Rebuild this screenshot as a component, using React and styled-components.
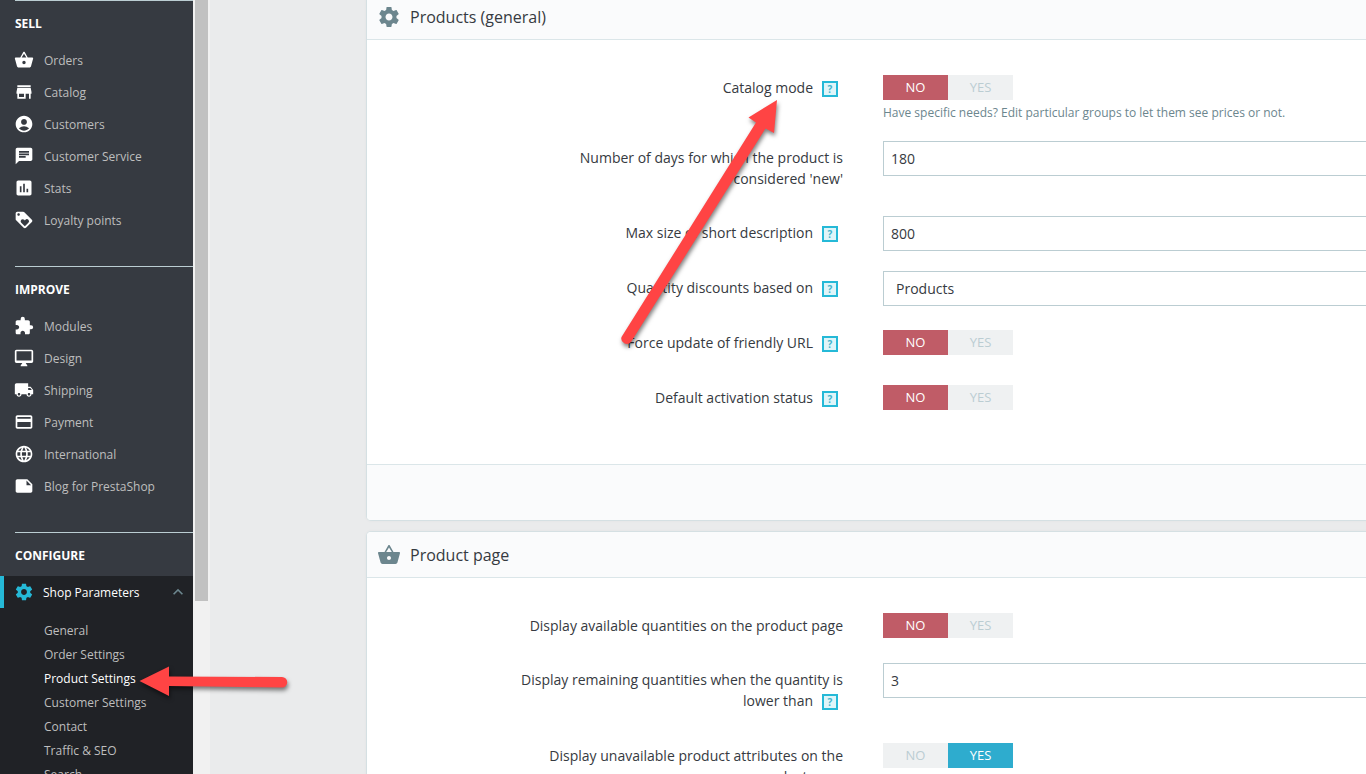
import { useState } from "react"
import styled, { createGlobalStyle } from "styled-components"
import {
    MdAccountCircle, MdChat, MdLoyalty, MdExtension,
    MdLocalShipping, MdLanguage, MdNote, MdKeyboardArrowUp,
} from "react-icons/md"

const icon = (d) => function Icon() {
    return (
        <svg viewBox="0 0 24 24" fill="currentColor" aria-hidden="true">
            <path d={d} />
        </svg>
    )
}

const BasketIcon = icon("M16.500 9L12.830 2.440c-.19-.28-.51-.42-.83-.42-.32 0-.64.14-.83.43L7.500 9H2c-.55 0-1 .45-1 1 0 .09.01.18.04.27l2.54 9.27c.23.84 1 1.46 1.92 1.46h13c.92 0 1.69-.62 1.93-1.46l2.54-9.27L23 10c0-.55-.45-1-1-1h-5.500zM9.200 9L12 4.600L14.800 9H9.200zm2.800 8c-1.1 0-2-.9-2-2s.9-2 2-2 2 .9 2 2-.9 2-2 2z")
const StoreIcon = icon("M20 4H4v2h16V4zm1 10v-2l-1-5H4l-1 5v2h1v6h10v-6h4v6h2v-6h1zm-9 4H6v-4h6v4z")
const StatsIcon = icon("M19 3H5c-1.1 0-2 .9-2 2v14c0 1.1.9 2 2 2h14c1.1 0 2-.9 2-2V5c0-1.1-.9-2-2-2zM9 17H7v-7h2v7zm4 0h-2V7h2v10zm4 0h-2v-4h2v4z")
const DesktopIcon = icon("M21 2H3c-1.1 0-2 .9-2 2v12c0 1.1.9 2 2 2h7l-2 3v1h8v-1l-2-3h7c1.1 0 2-.9 2-2V4c0-1.1-.9-2-2-2zm0 13H3V4h18v11z")
const CardIcon = icon("M20 4H4c-1.11 0-1.99.89-1.99 2L2 18c0 1.11.89 2 2 2h16c1.11 0 2-.89 2-2V6c0-1.11-.89-2-2-2zm0 14H4v-6h16v6zm0-10H4V6h16v2z")
const GearIcon = icon("M19.43 12.98c.04-.32.07-.64.07-.98s-.03-.66-.07-.98l2.11-1.65c.19-.15.24-.42.12-.64l-2-3.46c-.12-.22-.39-.3-.61-.22l-2.49 1c-.52-.4-1.08-.73-1.69-.98l-.38-2.65C14.46 2.18 14.25 2 14 2h-4c-.25 0-.46.18-.49.42l-.38 2.65c-.61.25-1.17.59-1.69.98l-2.49-1c-.23-.09-.49 0-.61.22l-2 3.46c-.13.22-.07.49.12.64l2.11 1.65c-.04.32-.07.65-.07.98s.03.66.07.98l-2.11 1.65c-.19.15-.24.42-.12.64l2 3.46c.12.22.39.3.61.22l2.49-1c.52.4 1.08.73 1.69.98l.38 2.65c.03.24.24.42.49.42h4c.25 0 .46-.18.49-.42l.38-2.65c.61-.25 1.17-.59 1.69-.98l2.49 1c.23.09.49 0 .61-.22l2-3.46c.12-.22.07-.49-.12-.64l-2.11-1.65zM12 15.5c-1.93 0-3.5-1.57-3.5-3.5s1.57-3.5 3.5-3.5 3.5 1.57 3.5 3.5-1.57 3.5-3.5 3.5z")

const sections = [
    {
        title: 'SELL',
        links: [
            { label: 'Orders', Icon: BasketIcon },
            { label: 'Catalog', Icon: StoreIcon },
            { label: 'Customers', Icon: MdAccountCircle },
            { label: 'Customer Service', Icon: MdChat },
            { label: 'Stats', Icon: StatsIcon },
            { label: 'Loyalty points', Icon: MdLoyalty },
        ],
    },
    {
        title: 'IMPROVE',
        links: [
            { label: 'Modules', Icon: MdExtension },
            { label: 'Design', Icon: DesktopIcon },
            { label: 'Shipping', Icon: MdLocalShipping },
            { label: 'Payment', Icon: CardIcon },
            { label: 'International', Icon: MdLanguage },
            { label: 'Blog for PrestaShop', Icon: MdNote },
        ],
    },
]

const shopLinks = ['General', 'Order Settings', 'Product Settings', 'Customer Settings', 'Contact', 'Traffic & SEO', 'Search']

function Switch({ id, initial = false }){
    const [on, setOn] = useState(initial)

    return(
        <SwitchStyled role="radiogroup" aria-labelledby={`${id}-label`}>
            <SwitchOption $active={!on} $color="#c05c67">
                <input type="radio" id={id} name={id} checked={!on} onChange={()=> setOn(false)} />
                NO
            </SwitchOption>
            <SwitchOption $active={on} $color="#2eacce">
                <input type="radio" name={id} checked={on} onChange={()=> setOn(true)} />
                YES
            </SwitchOption>
        </SwitchStyled>
    )
}

function Field({ id, label, help, children }){
    return(
        <FieldRow>
            <FieldLabel id={`${id}-label`} htmlFor={id}>
                {label}
                {help && <HelpBox>?</HelpBox>}
            </FieldLabel>
            <div>{children}</div>
        </FieldRow>
    )
}

function Sidebar(){
    return(
        <SidebarStyled>
            {sections.map(({ title, links }) => (
                <NavSection key={title}>
                    <NavTitle>{title}</NavTitle>
                    <ul>
                        {links.map(({ label, Icon }) => (
                            <li key={label}>
                                <NavLink href="#"><Icon />{label}</NavLink>
                            </li>
                        ))}
                    </ul>
                </NavSection>
            ))}
            <NavSection>
                <NavTitle>CONFIGURE</NavTitle>
            </NavSection>
            <OpenMenu>
                <OpenLink href="#">
                    <GearIcon />
                    Shop Parameters
                    <MdKeyboardArrowUp className="arrow" />
                </OpenLink>
                <ul>
                    {shopLinks.map((label) => (
                        <li key={label}>
                            <SubLink href="#" $current={label === 'Product Settings'}>{label}</SubLink>
                        </li>
                    ))}
                </ul>
            </OpenMenu>
        </SidebarStyled>
    )
}

export default function App(){
    return(
        <>
            <GlobalStyle />
            <Page>
                <Sidebar />
                <ScrollTrack><ScrollThumb /></ScrollTrack>
                <Main>
                    <Panel>
                        <PanelHeader><GearIcon /><h2>Products (general)</h2></PanelHeader>
                        <PanelBody>
                            <Field id="catalog" label="Catalog mode" help>
                                <Switch id="catalog" />
                                <Hint>Have specific needs? Edit particular groups to let them see prices or not.</Hint>
                            </Field>
                            <Field id="days" label="Number of days for which the product is considered 'new'">
                                <TextInput id="days" type="text" defaultValue="180" />
                            </Field>
                            <Field id="short" label="Max size of short description" help>
                                <TextInput id="short" type="text" defaultValue="800" />
                            </Field>
                            <Field id="discounts" label="Quantity discounts based on" help>
                                <Select id="discounts">
                                    <option>Products</option>
                                    <option>Combinations</option>
                                </Select>
                            </Field>
                            <Field id="url" label="Force update of friendly URL" help>
                                <Switch id="url" />
                            </Field>
                            <Field id="activation" label="Default activation status" help>
                                <Switch id="activation" />
                            </Field>
                        </PanelBody>
                        <PanelFooter />
                    </Panel>
                    <Panel>
                        <PanelHeader><BasketIcon /><h2>Product page</h2></PanelHeader>
                        <PanelBody>
                            <Field id="available" label="Display available quantities on the product page">
                                <Switch id="available" />
                            </Field>
                            <Field id="remaining" label="Display remaining quantities when the quantity is lower than" help>
                                <TextInput id="remaining" type="text" defaultValue="3" />
                            </Field>
                            <Field id="unavailable" label="Display unavailable product attributes on the product page">
                                <Switch id="unavailable" initial />
                            </Field>
                        </PanelBody>
                    </Panel>
                </Main>
                <Arrows width="800" height="720" viewBox="0 0 800 720" aria-hidden="true">
                    <path d="M777 100 L774 133 L765.500 128.500 L631 342 A5.500 5.500 0 0 1 621.500 337 L756 122.500 L748.500 117.500 Z" />
                    <path d="M139.500 681 L169 666.500 L169 676.500 L282 677 A5 5 0 0 1 282 687.500 L169 686 L169 696 Z" />
                </Arrows>
            </Page>
        </>
    )
}

const GlobalStyle = createGlobalStyle`
  *{
    box-sizing: border-box;
  }
  body{
    margin: 0;
    background: #eaebec;
    color: #363a41;
    font-family: "Open Sans", "Noto Sans", sans-serif;
    font-size: 14px;
  }
  ul{
    margin: 0;
    padding: 0;
    list-style: none;
  }
`

const Page = styled.div`
  position: relative;
  display: flex;
  height: 100vh;
  overflow: hidden;
`

const SidebarStyled = styled.nav`
  flex: 0 0 193px;
  background: #363a41;
`

const NavSection = styled.section`
  & + &{
    margin-top: 30px;
  }
`

const NavTitle = styled.h3`
  margin: 0 0 0 15px;
  padding: 13px 0 10px;
  border-top: 1px solid #bbcdd2;
  color: #fff;
  font-size: 12px;
  line-height: 20px;
  font-weight: 700;
`

const NavLink = styled.a`
  display: flex;
  align-items: center;
  gap: 10px;
  height: 32px;
  padding-left: 14px;
  color: #bebebe;
  font-size: 12px;
  text-decoration: none;

  svg{
    width: 20px;
    height: 20px;
    color: #fff;
  }
`

const OpenMenu = styled.div`
  background: #202226;

  ul{
    padding-top: 11px;
  }
`

const OpenLink = styled(NavLink)`
  gap: 9px;
  padding: 0 5px 0 10px;
  border-left: 4px solid #25b9d7;
  color: #fff;

  svg{
    color: #25b9d7;
  }
  .arrow{
    margin-left: auto;
    color: #6c868e;
  }
`

const SubLink = styled.a`
  display: block;
  padding-left: 44px;
  color: ${({ $current }) => $current ? '#fff' : '#bebebe'};
  font-size: 12px;
  line-height: 24px;
  text-decoration: none;
`

const ScrollTrack = styled.div`
  flex: 0 0 17px;
  padding: 0 2px;
  background: #f1f1f1;
`

const ScrollThumb = styled.div`
  height: 601px;
  background: #c1c1c1;
`

/* the form is scrolled, so the first panel starts a little above the window */
const Main = styled.main`
  flex: 1 0 1200px;
  margin-top: -6px;
  padding-left: 157px;
`

const Panel = styled.section`
  margin-bottom: 12px;
  border-radius: 4px;
  background: #fff;
  box-shadow: 0 0 4px 0 rgba(0, 0, 0, .06), 0 0 0 1px #dbe6e9;
  overflow: hidden;
`

const PanelHeader = styled.header`
  display: flex;
  align-items: center;
  gap: 9px;
  padding: 0 10px;
  height: 46px;
  border-bottom: 1px solid #dbe6e9;
  background: #fafbfc;

  svg{
    width: 24px;
    height: 24px;
    color: #6c868e;
  }
  h2{
    margin: 0;
    font-size: 16px;
    font-weight: 400;
  }
`

const PanelBody = styled.div`
  display: grid;
  gap: 20px;
  padding: 31px 0 48px;
`

const PanelFooter = styled.footer`
  height: 56px;
  border-top: 1px solid #dbe6e9;
  background: #fafbfc;
`

const FieldRow = styled.div`
  display: grid;
  grid-template-columns: 336px 1fr;
  gap: 40px;
  padding-left: 140px;
`

const FieldLabel = styled.label`
  padding: 6px 0 7px;
  line-height: 21px;
  text-align: right;
`

const HelpBox = styled.span`
  display: inline-block;
  width: 16px;
  height: 16px;
  margin: 0 5px 2px 9px;
  border: 2px solid #25b9d7;
  background: #dff5f9;
  color: #45b4cc;
  font-size: 10px;
  font-weight: 700;
  line-height: 12px;
  text-align: center;
`

const SwitchStyled = styled.div`
  display: flex;
  width: 130px;
  margin-top: 4px;
`

const SwitchOption = styled.label`
  flex: 1;
  background: ${({ $active, $color }) => $active ? $color : '#eff1f2'};
  color: ${({ $active }) => $active ? '#fff' : '#bbcdd2'};
  font-size: 13px;
  line-height: 25px;
  text-align: center;
  cursor: pointer;

  input{
    position: absolute;
    opacity: 0;
    pointer-events: none;
  }
`

const Hint = styled.p`
  margin: 4px 0 0;
  color: #6c868e;
  font-size: 12px;
  line-height: 17px;
`

const TextInput = styled.input`
  display: block;
  width: 100%;
  height: 35px;
  padding: 0 7px;
  border: 1px solid #bbcdd2;
  background: #fff;
  color: #363a41;
  font: inherit;
`

const Select = styled.select`
  display: block;
  width: 100%;
  height: 35px;
  padding: 0 12px;
  border: 1px solid #bbcdd2;
  border-radius: 0;
  background: #fff;
  color: #363a41;
  font: inherit;
  appearance: none;
`

const Arrows = styled.svg`
  position: absolute;
  top: 0;
  left: 0;
  fill: #ff4444;
  filter: drop-shadow(1px 3px 2px rgba(0, 0, 0, .5));
  pointer-events: none;
`
